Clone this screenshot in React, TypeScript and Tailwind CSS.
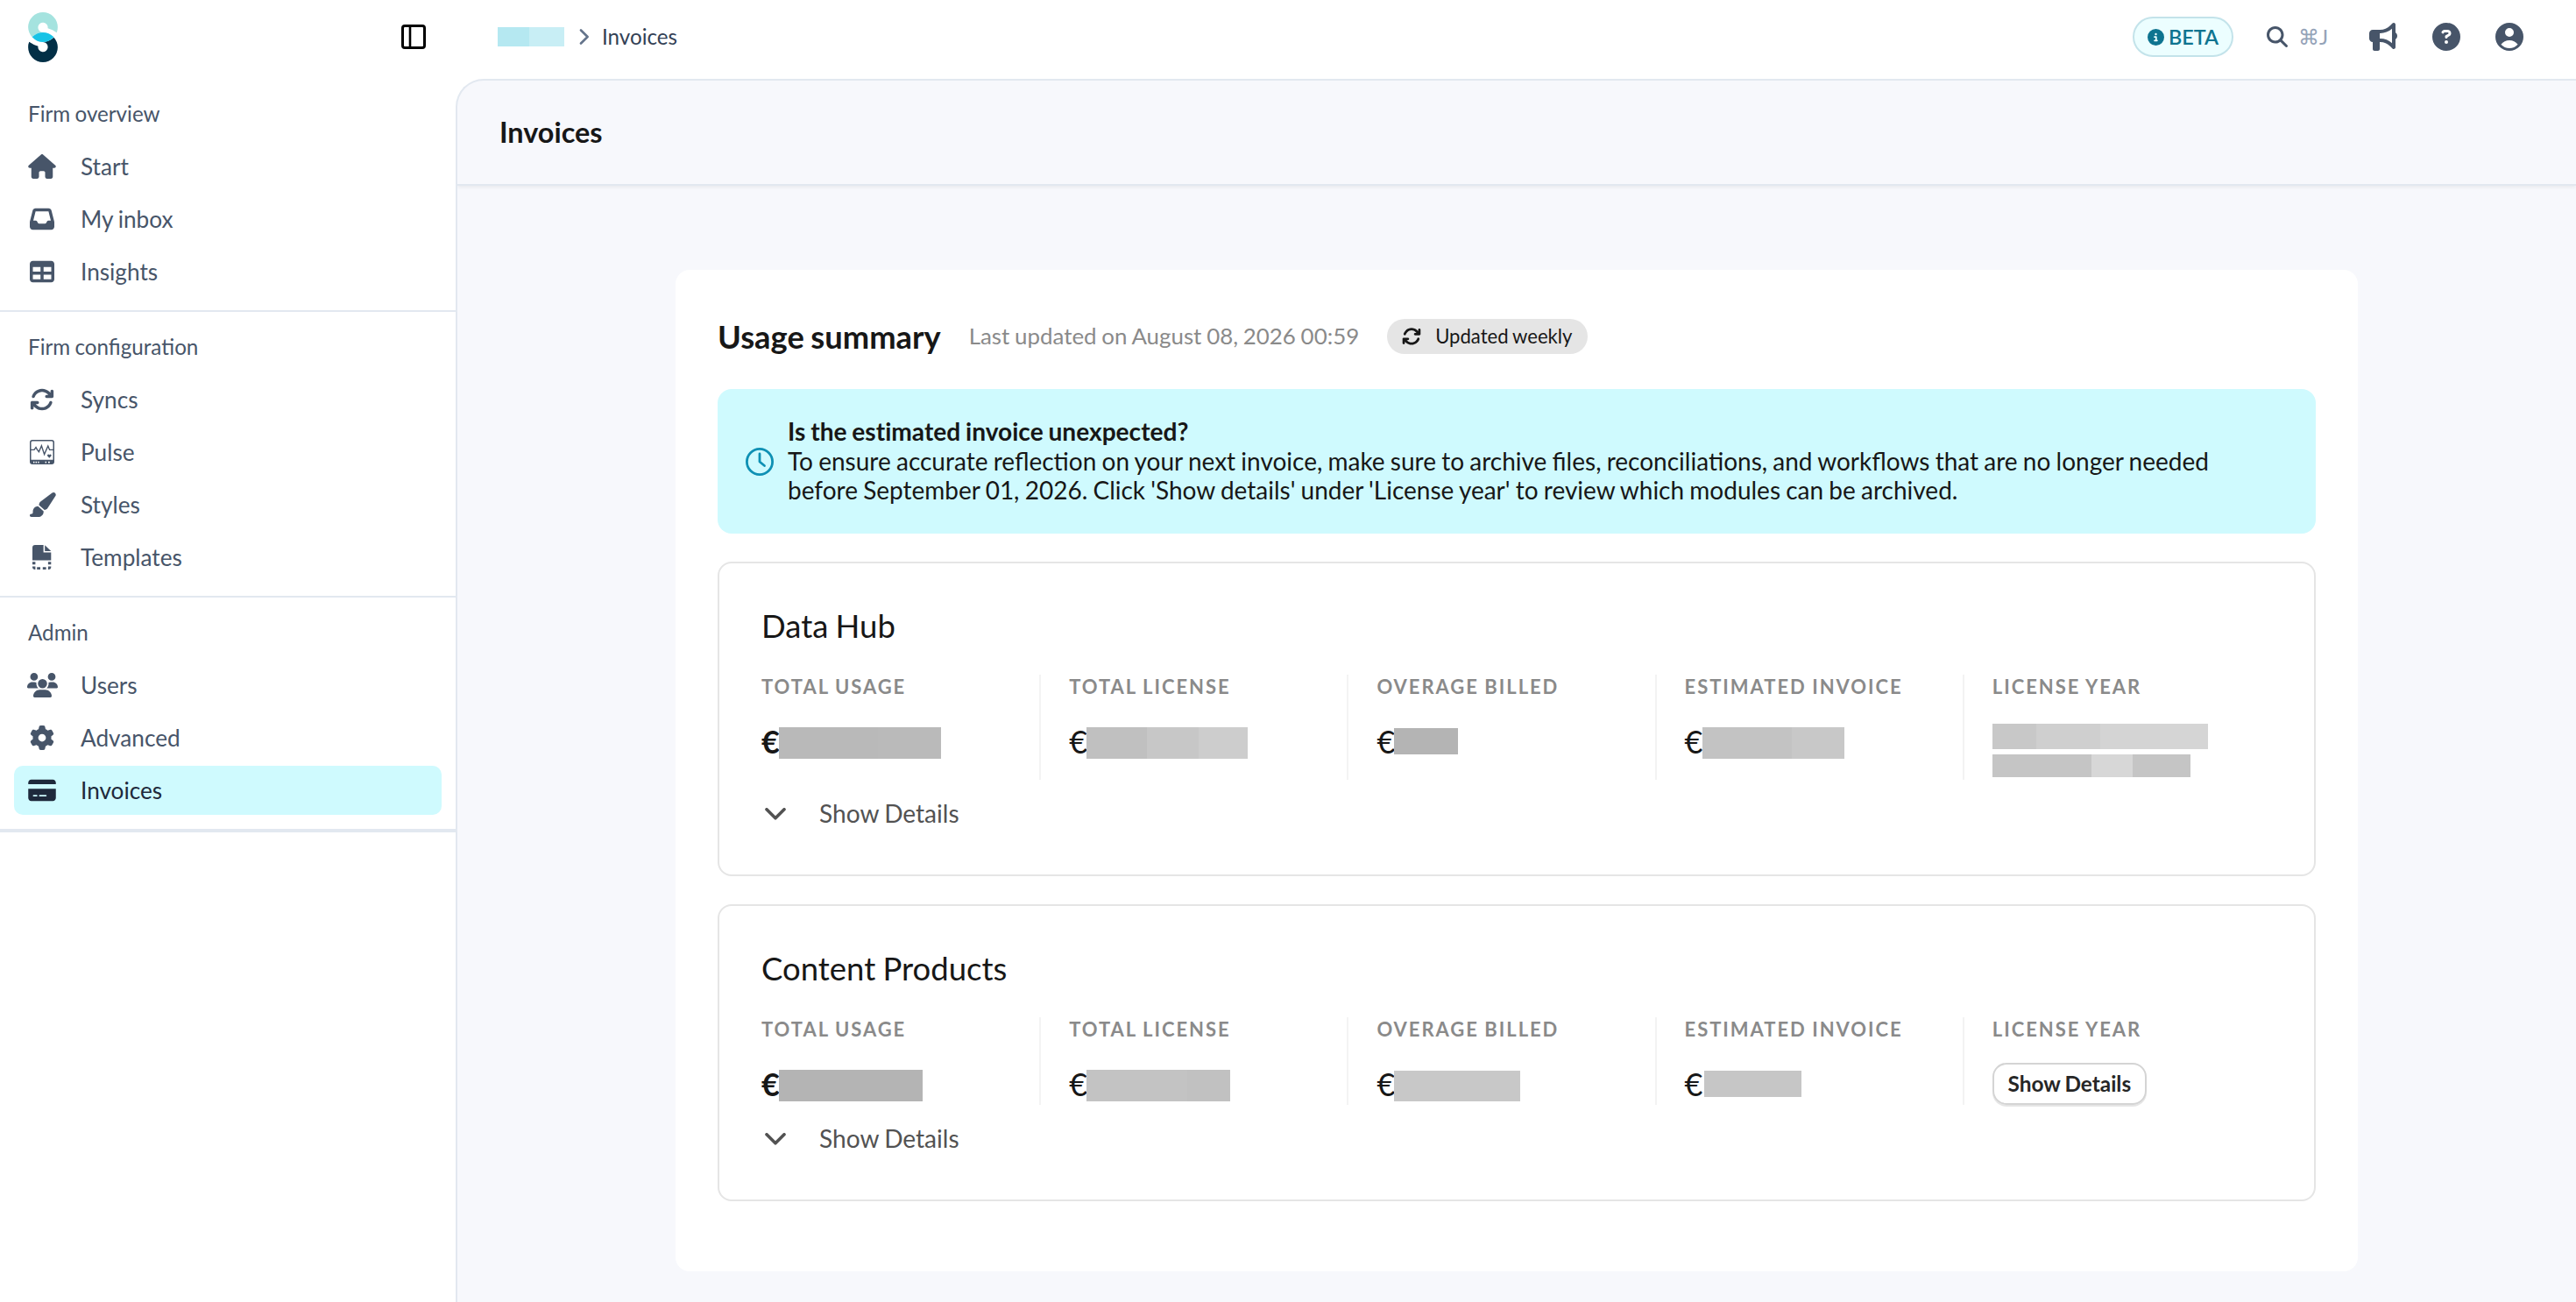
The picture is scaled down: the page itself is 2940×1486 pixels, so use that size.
import React from "react";
import {
  FaArrowsRotate,
  FaBullhorn,
  FaCircleInfo,
  FaCircleQuestion,
  FaCreditCard,
  FaGear,
  FaHouse,
  FaInbox,
  FaMagnifyingGlass,
  FaPaintbrush,
  FaTable,
  FaUsers,
} from "react-icons/fa6";
import { HiMiniUserCircle } from "react-icons/hi2";

const Logo = () => (
  <svg width="34" height="57" viewBox="0 0 33.5 56.6">
    <path
      fill="#a5e3df"
      d="M4.4 28A16.9 17 0 0 1 0 17A16.75 17 0 0 1 33.5 17Q33.5 20.4 32.4 23Q27.8 19.6 22.3 18.2A5.6 5.6 0 1 0 16.7 22.9Q10 22.9 4.4 28Z"
    />
    <path
      fill="#022f46"
      transform="rotate(180 16.75 28.3)"
      d="M4.4 28A16.9 17 0 0 1 0 17A16.75 17 0 0 1 33.5 17Q33.5 20.4 32.4 23Q27.8 19.6 22.3 18.2A5.6 5.6 0 1 0 16.7 22.9Q10 22.9 4.4 28Z"
    />
    <path fill="#18c3e6" d="M4.4 28Q10 22.8 16.75 22.8Q23.5 22.8 29.1 28Q23.5 33.8 16.75 33.8Q10 33.8 4.4 28Z" />
  </svg>
);

const PanelIcon = () => (
  <svg width="28" height="28" viewBox="0 0 28 28" fill="none" stroke="#000" strokeWidth="3">
    <rect x="1.5" y="1.5" width="25" height="25" rx="2.5" />
    <path d="M10 1.5V26.5" strokeWidth="2.6" />
  </svg>
);

const PulseIcon = () => (
  <svg width="28" height="28" viewBox="0 0 28 28">
    <path
      fill="currentColor"
      fillRule="evenodd"
      d="M3 0H25A3 3 0 0 1 28 3V25A3 3 0 0 1 25 28H3A3 3 0 0 1 0 25V3A3 3 0 0 1 3 0ZM3 1.5A1.5 1.5 0 0 0 1.5 3V22.8H26.5V3A1.5 1.5 0 0 0 25 1.5Z"
    />
    <path
      fill="none"
      stroke="currentColor"
      strokeWidth="1.4"
      d="M1 11.4H5L7 8.6L8.4 11.2L10.4 13.6L13.4 6.8L16.6 16.6L20.8 7L22.6 11.4H27"
    />
    <path fill="currentColor" d="M22.3 20.8L20.2 18.6A1.2 1.2 0 0 1 22.3 17.2A1.2 1.2 0 0 1 24.4 18.6Z" />
    <path stroke="#fff" strokeWidth="1.6" d="M4 25.6H5.4M6.6 25.6H8M9.2 25.6H10.6M17.6 25.6H19M21 25.6H22.8" />
  </svg>
);

const TemplateIcon = () => (
  <svg width="28" height="28" viewBox="0 0 28 28" fill="currentColor">
    <path d="M6 0H15.6V8.6H24.3V17.6H3V3A3 3 0 0 1 6 0Z" />
    <path d="M17.2 0.3L24.3 7H17.2Z" />
    <path d="M3 19.3H6.4V22.2H3ZM20.9 19.3H24.3V22.2H20.9ZM3 24.6H6.4V28H5.4A2.4 2.4 0 0 1 3 25.6ZM8.2 25.2H12V28H8.2ZM14.8 25.2H18.6V28H14.8ZM20.9 24.6H24.3V25.6A2.4 2.4 0 0 1 21.9 28H20.9Z" />
  </svg>
);

const ClockIcon = () => (
  <svg width="32" height="32" viewBox="0 0 32 32" fill="none" stroke="#0e90b4" strokeWidth="2.8" strokeLinecap="round" strokeLinejoin="round">
    <circle cx="16" cy="16" r="14.6" />
    <path d="M16 7V16L21.5 20.5" />
  </svg>
);

type NavItem = { label: string; icon: React.ReactNode; active?: boolean };

const groups: { title: string; items: NavItem[] }[] = [
  {
    title: "Firm overview",
    items: [
      { label: "Start", icon: <FaHouse size={28} className="w-8" /> },
      { label: "My inbox", icon: <FaInbox size={28} /> },
      { label: "Insights", icon: <FaTable size={28} /> },
    ],
  },
  {
    title: "Firm configuration",
    items: [
      { label: "Syncs", icon: <FaArrowsRotate size={28} /> },
      { label: "Pulse", icon: <PulseIcon /> },
      { label: "Styles", icon: <FaPaintbrush size={28} className="w-8" /> },
      { label: "Templates", icon: <TemplateIcon /> },
    ],
  },
  {
    title: "Admin",
    items: [
      { label: "Users", icon: <FaUsers size={28} className="w-[35px]" /> },
      { label: "Advanced", icon: <FaGear size={28} /> },
      { label: "Invoices", icon: <FaCreditCard size={28} className="w-8" />, active: true },
    ],
  },
];

function Sidebar() {
  return (
    <aside className="w-[520px] shrink-0">
      <div className="flex h-[90px] items-start justify-between pl-8 pr-[34px]">
        <div className="pt-3.5">
          <Logo />
        </div>
        <div className="pt-7">
          <PanelIcon />
        </div>
      </div>
      {groups.map((g) => (
        <section key={g.title} className="border-b-2 border-[#e2e8f0] px-4 pb-4 text-[#475569]">
          <h2 className="h-[72px] px-4 pt-[25px] text-[24.2px] leading-[29px]">{g.title}</h2>
          <ul className="flex flex-col gap-1">
            {g.items.map((it) => (
              <li
                key={it.label}
                className={
                  it.active
                    ? "flex h-14 items-center gap-6 rounded-[10px] bg-[#cffafe] px-3 text-[#1e293b]"
                    : "flex h-14 items-center gap-6 px-3"
                }
              >
                <span className="flex w-10 justify-center">{it.icon}</span>
                <span className="pt-0.5 text-[26.2px]">{it.label}</span>
              </li>
            ))}
          </ul>
        </section>
      ))}
      <div className="h-0.5 bg-[#e2e8f0]" />
    </aside>
  );
}

function Topbar() {
  return (
    <header className="flex h-[90px] items-center justify-between pb-1.5 pl-12 pr-[60px]">
      <div className="flex items-center">
        <span className="flex h-[22px]">
          <span className="w-9 bg-[#b5e8f1]" />
          <span className="w-10 bg-[#c8eef5]" />
        </span>
        <svg className="ml-[17px]" width="12" height="18" viewBox="0 0 12 18" fill="none" stroke="#64748b" strokeWidth="2.6" strokeLinecap="round" strokeLinejoin="round">
          <path d="M2 1.5L9.6 9L2 16.5" />
        </svg>
        <span className="ml-[14px] text-[24.2px] text-[#334155]">Invoices</span>
      </div>
      <div className="flex items-center text-[#475569]">
        <span className="flex h-[46px] w-[115px] items-center gap-[5px] rounded-full border-2 border-[#c3e3ea] bg-[#ecfeff] pl-[15px] text-[23.4px] font-semibold text-[#0e7490]">
          <FaCircleInfo size={19} />
          <span className="pt-px">BETA</span>
        </span>
        <FaMagnifyingGlass size={24} className="ml-[38px]" />
        <span className="ml-3 w-8 whitespace-nowrap text-[24px] text-[#94a3b8]">⌘J</span>
        <FaBullhorn size={32} className="ml-[49px]" />
        <FaCircleQuestion size={32} className="ml-10" />
        <HiMiniUserCircle size={40} className="ml-9 -mr-1" />
      </div>
    </header>
  );
}

type Seg = [number, string];

function Redacted({ h, segs }: { h: number; segs: Seg[] }) {
  return (
    <span className="flex" style={{ height: h }}>
      {segs.map(([w, c], i) => (
        <span key={i} style={{ width: w, backgroundColor: c }} />
      ))}
    </span>
  );
}

function Amount({ bold, h, mt, segs, gap }: { bold?: boolean; h: number; mt: number; segs: Seg[]; gap?: boolean }) {
  return (
    <div className="flex items-start text-[#171717]">
      <span className={bold ? "w-5 text-[36px] font-bold leading-[44px]" : "w-5 text-[36px] leading-[44px]"}>€</span>
      <span className={gap ? "z-10 pl-0.5" : "z-10"} style={{ marginTop: mt }}>
        <Redacted h={h} segs={segs} />
      </span>
    </div>
  );
}

function Column({ label, last, children }: { label: string; last?: boolean; children: React.ReactNode }) {
  return (
    <div className={last ? "flex flex-col" : "flex flex-col border-r-2 border-[#f3f3f3]"}>
      <div className="h-[54px] whitespace-nowrap text-[22px] font-bold leading-[27px] tracking-[1.95px] text-[#8a8a8a]">{label}</div>
      {children}
    </div>
  );
}

function ProductCard({ title, gridHeight, children }: { title: string; gridHeight: string; children: React.ReactNode }) {
  return (
    <section className="rounded-2xl border-2 border-[#e5e5e5] px-12 pb-[52px]">
      <h3 className="h-[127px] pt-[49px] text-[36.5px] leading-[44px] text-[#171717]">{title}</h3>
      <div className={"grid grid-cols-5 gap-8 " + gridHeight}>{children}</div>
      <div className="mt-5 flex h-9 items-center text-[28.1px] text-[#525252]">
        <svg className="ml-1 mt-0.5" width="24" height="14" viewBox="0 0 24 14" fill="none" stroke="currentColor" strokeWidth="3.6" strokeLinecap="round" strokeLinejoin="round">
          <path d="M2 1.8L12 11.8L22 1.8" />
        </svg>
        <span className="ml-[38px]">Show Details</span>
      </div>
    </section>
  );
}

export default function App() {
  return (
    <div className="flex h-[1486px] w-[2940px] overflow-hidden bg-white font-[Lato,sans-serif] text-[#171717] [&_*]:[word-spacing:-0.034em]">
      <Sidebar />
      <div className="flex flex-1 flex-col">
        <Topbar />
        <main className="flex flex-1 flex-col overflow-hidden rounded-tl-[32px] border-l-2 border-t-2 border-[#e2e8f0] bg-[#f7f8fc]">
          <div className="flex h-[120px] shrink-0 items-center border-b-2 border-[#e2e8f0] pl-12 shadow-[0_2px_4px_rgba(0,0,0,0.06)]">
            <h1 className="text-[32.4px] font-bold">Invoices</h1>
          </div>
          <div className="mx-auto mt-24 h-[1143px] w-[1920px] shrink-0 rounded-2xl bg-white px-12 pt-14">
            <div className="flex h-10 items-center">
              <h2 className="text-[36.3px] font-bold">Usage summary</h2>
              <span className="-mt-0.5 ml-8 text-[25.9px] text-[#8a8a8a]">Last updated on August 08, 2026 00:59</span>
              <span className="ml-8 flex h-10 w-[229px] items-center gap-4 rounded-full bg-[#e5e5e5] pl-[17px] text-[22.1px]">
                <FaArrowsRotate size={22} />
                <span className="-mt-px">Updated weekly</span>
              </span>
            </div>
            <div className="mt-10 flex h-[165px] items-center gap-4 rounded-2xl bg-[#cffafe] pl-8">
              <ClockIcon />
              <p className="w-[1660px] text-[28px] leading-[33.6px]">
                <strong className="text-[28.1px] font-bold [font-variant-ligatures:none]">Is the estimated invoice unexpected?</strong>
                <br />
                To ensure accurate reflection on your next invoice, make sure to archive files, reconciliations, and workflows that are no longer needed
                <br />
                before September 01, 2026. Click 'Show details' under 'License year' to review which modules can be archived.
              </p>
            </div>
            <div className="mt-8 flex flex-col gap-8">
              <ProductCard title="Data Hub" gridHeight="h-[120px]">
                <Column label="TOTAL USAGE">
                  <Amount bold h={36} mt={6} segs={[[113, "#b9b9b9"], [72, "#bababa"]]} />
                </Column>
                <Column label="TOTAL LICENSE">
                  <Amount h={36} mt={6} segs={[[69, "#c0c0c0"], [59, "#c7c7c7"], [56, "#cdcdcd"]]} />
                </Column>
                <Column label="OVERAGE BILLED">
                  <Amount h={30} mt={7} segs={[[73, "#b4b4b4"]]} />
                </Column>
                <Column label="ESTIMATED INVOICE">
                  <Amount h={36} mt={6} segs={[[102, "#c3c3c3"], [60, "#c8c8c8"]]} />
                </Column>
                <Column label="LICENSE YEAR" last>
                  <div className="flex flex-col gap-1.5 pt-0.5">
                    <Redacted h={29} segs={[[50, "#c8c8c8"], [73, "#cfcfcf"], [68, "#d4d4d4"], [55, "#d5d5d5"]]} />
                    <Redacted h={26} segs={[[113, "#c5c5c5"], [47, "#d7d7d7"], [66, "#c5c5c5"]]} />
                  </div>
                </Column>
              </ProductCard>
              <ProductCard title="Content Products" gridHeight="h-[100px]">
                <Column label="TOTAL USAGE">
                  <Amount bold h={36} mt={6} segs={[[164, "#b4b4b4"]]} />
                </Column>
                <Column label="TOTAL LICENSE">
                  <Amount h={36} mt={6} segs={[[115, "#c3c3c3"], [49, "#c1c1c1"]]} />
                </Column>
                <Column label="OVERAGE BILLED">
                  <Amount h={35} mt={7} segs={[[144, "#c8c8c8"]]} />
                </Column>
                <Column label="ESTIMATED INVOICE">
                  <Amount gap h={30} mt={7} segs={[[111, "#c6c6c6"]]} />
                </Column>
                <Column label="LICENSE YEAR" last>
                  <button className="-mt-0.5 h-12 w-[176px] shrink-0 rounded-2xl border-2 border-[#d4d4d4] text-[24.4px] font-bold leading-none text-[#262626] shadow-[0_2px_0_rgba(0,0,0,0.1)]">
                    Show Details
                  </button>
                </Column>
              </ProductCard>
            </div>
          </div>
        </main>
      </div>
    </div>
  );
}
